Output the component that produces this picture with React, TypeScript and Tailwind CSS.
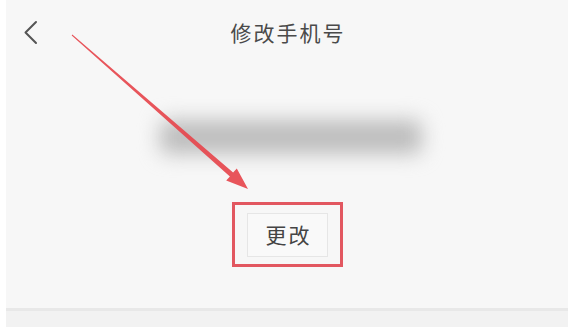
import React from "react";

export default function App() {
  return (
    <div
      className="w-[573px] h-[327px] bg-white flex pl-[6px] pr-[5px] overflow-hidden"
      style={{ fontFamily: '"Noto Sans CJK SC", "Noto Sans", sans-serif' }}
    >
      <div className="relative flex-1 bg-[#f7f7f7] flex flex-col">
        <div className="h-[66px] grid grid-cols-[50px_1fr_50px] items-center">
          <div className="pl-[17px]">
            <svg width="16" height="26" viewBox="0 0 16 26" fill="none">
              <path d="M13 2 L2.5 12.5 L13 23" stroke="#555" strokeWidth="2" strokeLinecap="round" strokeLinejoin="round" />
            </svg>
          </div>
          <div className="text-center text-[21px] leading-none text-[#4a4a4a] tracking-[2px] pb-[1px] pl-[2px]">修改手机号</div>
          <div />
        </div>

        <div className="h-[136px] flex justify-center pt-[54px]">
          <div className="ml-[8px] w-[262px] h-[34px] bg-[#bdbdbd] blur-[10px] rounded-[8px]" />
        </div>

        <div className="flex justify-center">
          <div className="ml-[1px] border-[3px] border-[#e25760] pl-[12px] pr-[12px] pt-[8px] pb-[7px]">
            <div className="w-[81px] h-[44px] bg-[#f9f9f9] border border-[#e6e6e6] flex items-center justify-center text-[21px] text-[#444] tracking-[2px] pl-[2px]">
              更改
            </div>
          </div>
        </div>

        <div className="flex-1" />
        <div className="h-[3px] bg-[#e8e8e8]" />
        <div className="h-[16px] bg-[#f2f2f2]" />

        <svg className="absolute left-[-6px] top-0 pointer-events-none" width="573" height="327" viewBox="0 0 573 327">
          <polygon
            points="72.3,34.6 233.1,172.6 236.8,168.5 248,189 226.2,180.5 229.9,176.4 71.7,35.4"
            fill="#e6464d"
            fillOpacity="0.92"
          />
        </svg>
      </div>
    </div>
  );
}
